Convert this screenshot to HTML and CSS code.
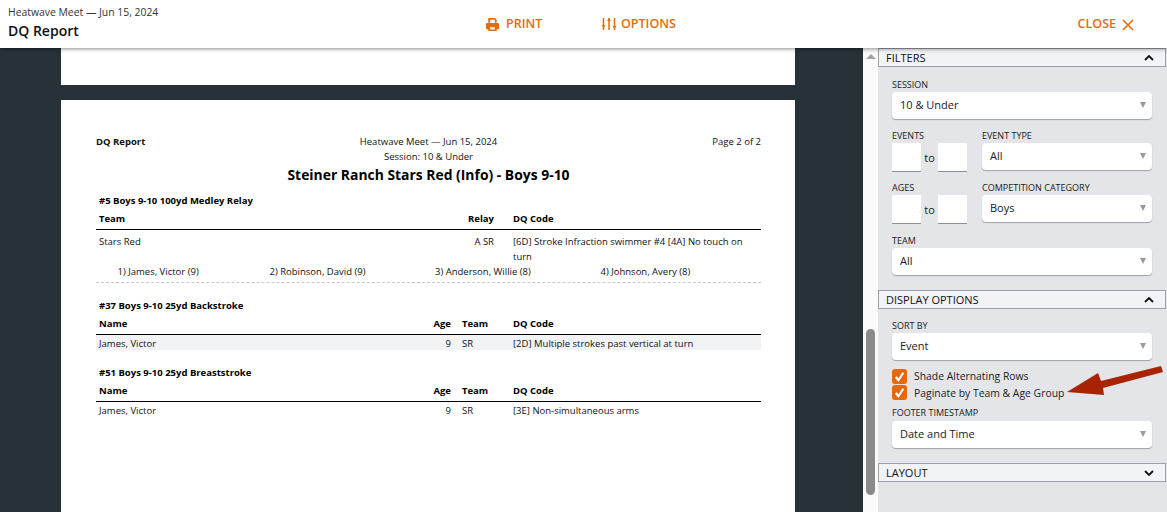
FILE: index.html
```html
<!DOCTYPE html>
<html lang="en">
<head>
    <meta charset="UTF-8">
    <title>DQ Report</title>
    <link rel="stylesheet" href="styles.css">
</head>
<body>

<header class="topbar">
    <div class="topbar-title">
        <div class="meet-name">Heatwave Meet — Jun 15, 2024</div>
        <div class="report-name">DQ Report</div>
    </div>
    <a class="action action-print">
        <svg class="icon-print" viewBox="0 0 16 16"><path fill="#e36c0a" d="M3.5 1h7.2L12.5 2.8V6h-2V3H5.500v3h-2zM2.500 6.500h11A1.500 1.500 0 0 1 15 8v4a1 1 0 0 1-1 1h-1.500v2h-9v-2H2a1 1 0 0 1-1-1V8a1.500 1.500 0 0 1 1.500-1.500zM5.500 11v2.200h5V11z"/></svg>
        PRINT
    </a>
    <a class="action action-options">
        <svg class="icon-options" viewBox="0 0 16 16"><path fill="none" stroke="#e36c0a" stroke-width="1.500" d="M2.500 2v12M8 2v12M13.500 2v12"/><path fill="#e36c0a" d="M0.500 9h4l-2 3zM6 5h4L8 2zM11.500 10h4l-2 3z"/></svg>
        OPTIONS
    </a>
    <a class="action action-close">
        CLOSE
        <svg class="icon-close" viewBox="0 0 12 12"><path fill="none" stroke="#e36c0a" stroke-width="1.600" d="M1 1l10 10M11 1L1 11"/></svg>
    </a>
</header>

<div class="workspace">
    <main class="preview">
        <div class="page page-stub"></div>
        <div class="page page-report">
            <div class="report-head">
                <div class="bold">DQ Report</div>
                <div class="head-center">Heatwave Meet — Jun 15, 2024<br>Session: 10 &amp; Under</div>
                <div class="head-right">Page 2 of 2</div>
            </div>
            <h1 class="team-title">Steiner Ranch Stars Red (Info) - Boys 9-10</h1>

            <h2 class="event-title">#5 Boys 9-10 100yd Medley Relay</h2>
            <div class="row row-relay row-header">
                <div>Team</div>
                <div class="right">Relay</div>
                <div>DQ Code</div>
            </div>
            <div class="row row-relay row-first">
                <div>Stars Red</div>
                <div class="right">A SR</div>
                <div>[6D] Stroke Infraction swimmer #4 [4A] No touch on turn</div>
            </div>
            <div class="swimmers">
                <div>1) James, Victor (9)</div>
                <div>2) Robinson, David (9)</div>
                <div>3) Anderson, Willie (8)</div>
                <div>4) Johnson, Avery (8)</div>
            </div>

            <h2 class="event-title event-gap">#37 Boys 9-10 25yd Backstroke</h2>
            <div class="row row-solo row-header">
                <div>Name</div>
                <div class="right">Age</div>
                <div>Team</div>
                <div>DQ Code</div>
            </div>
            <div class="row row-solo row-shaded">
                <div>James, Victor</div>
                <div class="right">9</div>
                <div>SR</div>
                <div>[2D] Multiple strokes past vertical at turn</div>
            </div>

            <h2 class="event-title event-gap">#51 Boys 9-10 25yd Breaststroke</h2>
            <div class="row row-solo row-header">
                <div>Name</div>
                <div class="right">Age</div>
                <div>Team</div>
                <div>DQ Code</div>
            </div>
            <div class="row row-solo row-plain">
                <div>James, Victor</div>
                <div class="right">9</div>
                <div>SR</div>
                <div>[3E] Non-simultaneous arms</div>
            </div>
        </div>
    </main>

    <div class="scrollbar">
        <div class="scroll-up"></div>
        <div class="scroll-thumb"></div>
    </div>

    <aside class="sidebar">
        <div class="section-head">FILTERS <svg class="chevron" viewBox="0 0 10 6"><path d="M1 5l4-4 4 4"/></svg></div>
        <div class="section-body">
            <label class="field-label">SESSION</label>
            <div class="select">10 &amp; Under</div>

            <div class="field-pair">
                <div>
                    <label class="field-label">EVENTS</label>
                    <div class="range"><div class="range-input"></div><span>to</span><div class="range-input"></div></div>
                </div>
                <div class="pair-main">
                    <label class="field-label">EVENT TYPE</label>
                    <div class="select">All</div>
                </div>
            </div>

            <div class="field-pair">
                <div>
                    <label class="field-label">AGES</label>
                    <div class="range"><div class="range-input"></div><span>to</span><div class="range-input"></div></div>
                </div>
                <div class="pair-main">
                    <label class="field-label">COMPETITION CATEGORY</label>
                    <div class="select">Boys</div>
                </div>
            </div>

            <label class="field-label field-next">TEAM</label>
            <div class="select">All</div>
        </div>

        <div class="section-head">DISPLAY OPTIONS <svg class="chevron" viewBox="0 0 10 6"><path d="M1 5l4-4 4 4"/></svg></div>
        <div class="section-body section-display">
            <label class="field-label">SORT BY</label>
            <div class="select">Event</div>
            <div class="checks">
                <div class="check"><span class="checkbox"><svg viewBox="0 0 14 14"><path d="M3.500 7.500l2.500 3 4.500-7"/></svg></span>Shade Alternating Rows</div>
                <div class="check"><span class="checkbox"><svg viewBox="0 0 14 14"><path d="M3.500 7.500l2.500 3 4.500-7"/></svg></span>Paginate by Team &amp; Age Group</div>
            </div>
            <label class="field-label field-gap">FOOTER TIMESTAMP</label>
            <div class="select">Date and Time</div>
        </div>

        <div class="section-head">LAYOUT <svg class="chevron" viewBox="0 0 10 6"><path d="M1 1l4 4 4-4"/></svg></div>

        <svg class="callout" viewBox="0 0 100 40"><path fill="#a82400" d="M1 32L32 13l3 8L95 6l2 6L37 28l1 7z"/></svg>
    </aside>
</div>

</body>
</html>
```

FILE: styles.css
```css
* {
    box-sizing: border-box;
}

body {
    margin: 0;
    height: 512px;
    overflow: hidden;
    display: flex;
    flex-direction: column;
    font-family: "Open Sans", "Noto Sans", sans-serif;
    color: #1a1a1a;
    background-color: #263238;
}

/* Top bar */
.topbar {
    position: relative;
    z-index: 2;
    flex: none;
    height: 48px;
    display: flex;
    align-items: center;
    padding-right: 33px;
    background-color: white;
    box-shadow: 0 1px 4px rgba(0, 0, 0, 0.45);
}

.topbar-title {
    width: 485px;
    padding-left: 8px;
}

.meet-name {
    font-size: 10.400px;
    line-height: 15px;
    margin-top: -3px;
    color: #333;
}

.report-name {
    font-size: 14px;
    line-height: 20px;
    margin-top: 1px;
    font-weight: 600;
    color: #111;
}

.action {
    display: flex;
    align-items: center;
    font-size: 12.500px;
    font-weight: 600;
    color: #e36c0a;
    margin-top: -2px;
}

.action-print {
    width: 116px;
    gap: 6px;
}

.action-options {
    gap: 4px;
}

.action-close {
    margin-left: auto;
    gap: 6px;
}

.icon-print {
    width: 15px;
    height: 15px;
    margin-top: 3px;
}

.icon-options {
    width: 16px;
    height: 16px;
    margin-top: 2px;
}

.icon-close {
    width: 12px;
    height: 12px;
    margin-top: 3px;
}

/* Report preview */
.workspace {
    flex: 1;
    min-height: 0;
    display: flex;
}

.preview {
    flex: 1;
    min-width: 0;
    padding: 0 68px 0 61px;
    overflow: hidden;
}

.page {
    background-color: white;
}

.page-stub {
    height: 37px;
    margin-bottom: 15px;
}

.page-report {
    height: 420px;
    padding: 34px 34px 0 35px;
    font-size: 9.500px;
    line-height: 15px;
    color: #111;
}

.report-head {
    display: grid;
    grid-template-columns: 1fr auto 1fr;
}

.bold {
    font-weight: 700;
}

.head-center {
    text-align: center;
}

.head-right,
.right {
    text-align: right;
}

.team-title {
    margin: 0;
    font-size: 13.900px;
    line-height: 21px;
    font-weight: 700;
    text-align: center;
    color: black;
}

.event-title {
    margin: 8px 0 0 3px;
    font-size: 9.500px;
    line-height: 15px;
    font-weight: 700;
    color: black;
}

.event-gap {
    margin-top: 15px;
}

.row {
    display: grid;
    padding: 0 16px 0 3px;
}

.row-relay {
    grid-template-columns: 1fr 60px 232px;
    column-gap: 19px;
}

.row-solo {
    grid-template-columns: 1fr 30px 40px 232px;
    column-gap: 11px;
}

.row-header {
    margin-top: 3px;
    padding-bottom: 3px;
    border-bottom: 1px solid black;
    font-weight: 700;
    color: black;
}

.row-first {
    margin-top: 4px;
}

.row-plain {
    margin-top: 0.500px;
}

.row-shaded {
    height: 15px;
    padding-top: 1px;
    background-color: #f2f3f5;
}

.swimmers {
    display: grid;
    grid-template-columns: 152px 165.500px 165.500px 1fr;
    padding: 0 0 3px 21.500px;
    border-bottom: 1px dashed #c8c8c8;
}

/* Fake scrollbar */
.scrollbar {
    flex: none;
    width: 15px;
    background-color: #fafafa;
}

.scroll-up {
    width: 0;
    margin: 6px auto 0;
    border-left: 5px solid transparent;
    border-right: 5px solid transparent;
    border-bottom: 5px solid #a3a3a3;
}

.scroll-thumb {
    width: 9px;
    height: 166px;
    margin: 270px auto 0;
    border-radius: 5px;
    background-color: #8a8a8a;
}

/* Options panel */
.sidebar {
    position: relative;
    flex: none;
    width: 289px;
    background-color: #e4e5e9;
}

.section-head {
    height: 19px;
    margin-right: 1px;
    display: flex;
    align-items: center;
    justify-content: space-between;
    padding: 0 11px 0 7px;
    font-size: 11px;
    font-weight: 500;
    color: #111;
    background-color: #f2f3f6;
    border: 1px solid #9aa0aa;
}

.chevron {
    width: 10px;
    height: 6px;
    fill: none;
    stroke: #111;
    stroke-width: 1.800;
}

.section-body {
    padding: 12px 15px 15px 14px;
}

.section-display {
    padding-top: 11px;
}

.field-label {
    display: block;
    font-size: 9px;
    line-height: 12px;
    margin-bottom: 1px;
    font-weight: 500;
    color: #1a1a1a;
}

.field-gap {
    margin-bottom: 2px;
}

.select {
    position: relative;
    height: 27px;
    padding-left: 8px;
    font-size: 11px;
    line-height: 26px;
    color: #1a1a1a;
    background-color: white;
    border-radius: 4px;
    box-shadow: 0 1px 1px rgba(0, 0, 0, 0.3);
}

.select::after {
    content: "";
    position: absolute;
    right: 6px;
    top: 10px;
    border-left: 3px solid transparent;
    border-right: 3px solid transparent;
    border-top: 6px solid #999;
}

.field-pair {
    display: flex;
    margin-top: 11px;
}

.field-pair + .field-pair {
    margin-top: 10px;
}

.pair-main {
    width: 170px;
    margin-left: 15px;
}

.range {
    width: 75px;
    display: flex;
    align-items: center;
    justify-content: space-between;
    font-size: 11px;
}

.range-input {
    width: 29px;
    height: 29px;
    background-color: white;
    border-bottom: 1px solid #8a8f98;
}

.field-next {
    margin-top: 11px;
}

.checks {
    margin: 8px 0 6px;
}

.check {
    display: flex;
    align-items: center;
    height: 16.500px;
    gap: 7px;
    font-size: 10.400px;
    color: #222;
}

.checkbox {
    width: 15px;
    height: 15px;
    border-radius: 3px;
    background-color: #e2690f;
}

.checkbox svg {
    display: block;
    fill: none;
    stroke: white;
    stroke-width: 2;
}

.callout {
    position: absolute;
    left: 188px;
    top: 312px;
    width: 100px;
    height: 40px;
}
```
